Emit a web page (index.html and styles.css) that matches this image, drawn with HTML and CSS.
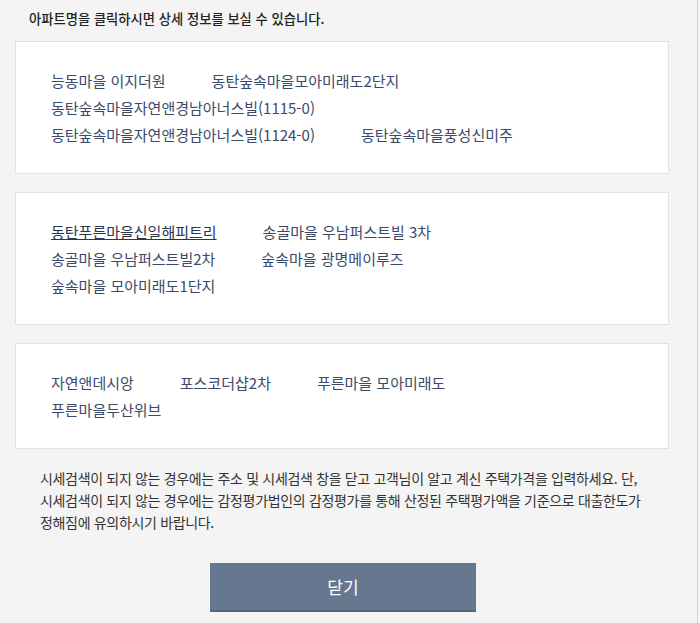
FILE: index.html
```html
<!DOCTYPE html>
<html lang="ko">
<head>
<meta charset="utf-8">
<title>아파트 선택</title>
<link rel="stylesheet" href="styles.css">
</head>
<body>
<div class="popup">
  <p class="guide">아파트명을 클릭하시면 상세 정보를 보실 수 있습니다.</p>
  <div class="apt-box">
    <a class="apt">능동마을 이지더원</a><a class="apt">동탄숲속마을모아미래도2단지</a><a class="apt">동탄숲속마을자연앤경남아너스빌(1115-0)</a><a class="apt">동탄숲속마을자연앤경남아너스빌(1124-0)</a><a class="apt">동탄숲속마을풍성신미주</a>
  </div>
  <div class="apt-box">
    <a class="apt active">동탄푸른마을신일해피트리</a><a class="apt">송골마을 우남퍼스트빌 3차</a><a class="apt">송골마을 우남퍼스트빌2차</a><a class="apt">숲속마을 광명메이루즈</a><a class="apt">숲속마을 모아미래도1단지</a>
  </div>
  <div class="apt-box">
    <a class="apt">자연앤데시앙</a><a class="apt">포스코더샵2차</a><a class="apt">푸른마을 모아미래도</a><a class="apt">푸른마을두산위브</a>
  </div>
  <p class="notice">시세검색이 되지 않는 경우에는 주소 및 시세검색 창을 닫고 고객님이 알고 계신 주택가격을 입력하세요. 단, 시세검색이 되지 않는 경우에는 감정평가법인의 감정평가를 통해 산정된 주택평가액을 기준으로 대출한도가 정해짐에 유의하시기 바랍니다.</p>
  <div class="actions">
    <button class="close-btn" type="button">닫기</button>
  </div>
</div>
</body>
</html>
```
FILE: styles.css
```css
html, body {
  margin: 0;
  padding: 0;
  background: #f4f4f4;
}
body {
  font-family: "Noto Sans CJK KR", "Noto Sans", sans-serif;
  color: #333;
}
.popup {
  width: 698px;
  height: 623px;
  box-sizing: border-box;
  border-right: 1px solid #d0d0d0;
  padding: 9px 0 0 15px;
}
.guide {
  margin: 0 0 12px 14px;
  font-size: 13.3px;
  font-weight: 500;
  line-height: 20px;
  color: #222;
  letter-spacing: 0;
}
.apt-box {
  width: 654px;
  box-sizing: border-box;
  background: #fff;
  border: 1px solid #e2e2e2;
  padding: 25px 35px;
  margin-bottom: 18px;
}
.apt {
  display: inline-block;
  margin-right: 46px;
  font-size: 15px;
  line-height: 27px;
  color: #3b4a6b;
  cursor: pointer;
}
.apt.active {
  text-decoration: underline;
  color: #2c3550;
}
.notice {
  margin: 10px 0 0 25px;
  width: 610px;
  font-size: 14px;
  line-height: 22px;
  color: #333;
  letter-spacing: -0.33px;
}
.actions {
  display: flex;
  justify-content: center;
  width: 656px;
  margin-top: 30px;
}
.close-btn {
  width: 266px;
  height: 49px;
  border: none;
  border-bottom: 2px solid #56667e;
  background: #66788f;
  color: #fff;
  font-family: inherit;
  font-size: 17px;
}
```
